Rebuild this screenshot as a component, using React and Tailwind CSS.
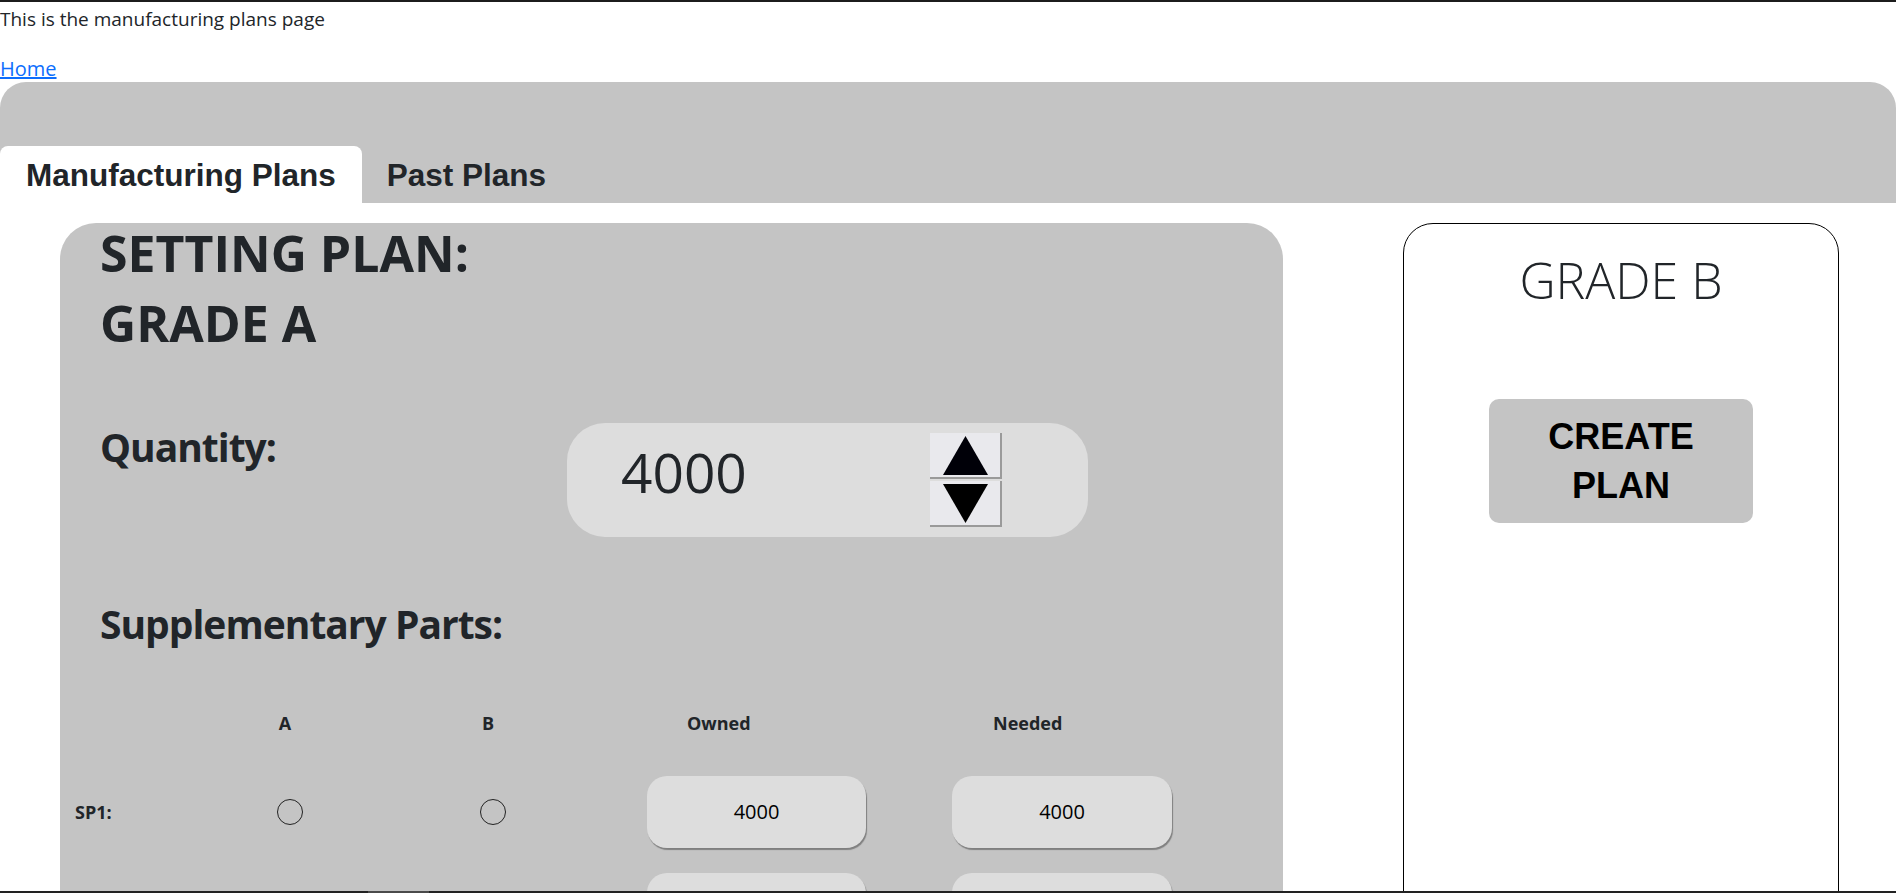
import React from 'react';

const segoe = { fontFamily: '"Open Sans", "Noto Sans", sans-serif' };
const arial = { fontFamily: '"Liberation Sans", Arial, sans-serif' };

const parts = ['SP1', 'SP2', 'SP3'];

// Spinner arrows drawn beside the quantity value
const Spinner = () => (
  <div className="flex flex-col w-[72px] h-[94px] gap-[2px]">
    <button className="flex-1 flex items-center justify-center bg-[#e9e9ed] border-r-2 border-b-2 border-[#9a9a9a]">
      <svg width="45" height="39" viewBox="0 0 45 39">
        <polygon points="22.5,0 45,39 0,39" fill="#000008" />
      </svg>
    </button>
    <button className="flex-1 flex items-center justify-center bg-[#e9e9ed] border-r-2 border-b-2 border-[#9a9a9a]">
      <svg width="45" height="39" viewBox="0 0 45 39">
        <polygon points="0,0 45,0 22.5,39" fill="#000" />
      </svg>
    </button>
  </div>
);

const PartRow = ({ name }) => (
  <div className="grid grid-cols-[115px_200px_206px_314px_320px] items-center h-[72px]">
    <span className="text-[18px] font-bold">{name}:</span>
    <div className="flex justify-center">
      <span className="w-[26px] h-[26px] rounded-full border border-[#222]" />
    </div>
    <div className="flex justify-center">
      <span className="w-[26px] h-[26px] rounded-full border border-[#222]" />
    </div>
    <div className="pl-[51px]">
      <div className="w-[219px] h-[72px] rounded-[20px] bg-[#dddddd] shadow-[1px_2px_1px_rgba(0,0,0,0.35)] flex items-center justify-center text-[20px] text-black">
        4000
      </div>
    </div>
    <div className="pl-[42px]">
      <div className="w-[220px] h-[72px] rounded-[20px] bg-[#dddddd] shadow-[1px_2px_1px_rgba(0,0,0,0.35)] flex items-center justify-center text-[20px] text-black">
        4000
      </div>
    </div>
  </div>
);

const App = () => {
  return (
    <div className="h-screen flex flex-col overflow-hidden bg-white text-[#212529]" style={segoe}>
      <div className="h-[2px] bg-[#1c1c1c]" />
      <div className="flex-1 overflow-hidden">
        <p className="pt-[2px] text-[19px] leading-[30px] mb-[20px]">This is the manufacturing plans page</p>
        <a href="#" className="block pt-[2px] text-[20px] leading-[26px] text-[#0d6efd] underline w-fit">Home</a>

        {/* tab bar */}
        <div className="h-[121px] bg-[#c4c4c4] rounded-t-[26px] flex items-end" style={arial}>
          <button className="h-[57px] px-[26px] bg-white rounded-t-[8px] text-[31.5px] leading-[36px] font-bold text-[#212529]">
            Manufacturing Plans
          </button>
          <button className="h-[57px] px-[25px] text-[31.5px] leading-[36px] font-bold text-[#212529]">
            Past Plans
          </button>
        </div>

        <div className="flex items-start pl-[60px] pt-[20px]">
          {/* setting plan card */}
          <div className="w-[1223px] h-[720px] bg-[#c4c4c4] rounded-[36px]">
            <div className="pl-[40px]">
              <h1 className="text-[50px] leading-[60px] font-bold mb-[10px]">SETTING PLAN:</h1>
              <h1 className="text-[50px] leading-[60px] font-bold">GRADE A</h1>

              <div className="flex items-start mt-[70px]">
                <h2 className="w-[467px] text-[39px] leading-[48px] font-bold tracking-[-1px]">Quantity:</h2>
                <div className="w-[521px] h-[114px] rounded-[38px] bg-[#dddddd] flex items-center pl-[54px] pr-[86px]">
                  <span className="flex-1 text-[55px] leading-[60px] mb-[16px]">4000</span>
                  <Spinner />
                </div>
              </div>

              <h2 className="mt-[63px] text-[39px] leading-[48px] font-bold tracking-[-1px]">Supplementary Parts:</h2>
            </div>

            <div className="pl-[15px] mt-[63px]">
              <div className="grid grid-cols-[115px_200px_206px_314px_320px] text-[18px] leading-[24px] font-bold mb-[41px]">
                <span />
                <span className="text-center pr-[10px]">A</span>
                <span className="text-center pr-[10px]">B</span>
                <span className="pl-[91px]">Owned</span>
                <span className="pl-[83px]">Needed</span>
              </div>
              <div className="flex flex-col gap-[25px]">
                {parts.map((p) => (
                  <PartRow key={p} name={p} />
                ))}
              </div>
            </div>
          </div>

          {/* grade b card */}
          <div className="ml-[120px] w-[436px] h-[720px] border border-black rounded-[30px] flex flex-col items-center pt-[26px]">
            <h1 className="text-[50px] leading-[60px] font-light">GRADE B</h1>
            <button
              className="mt-[89px] w-[264px] px-[20px] py-[13px] rounded-[10px] bg-[#c4c4c4] text-black text-[36px] leading-[49px] font-bold"
              style={arial}
            >
              CREATE PLAN
            </button>
          </div>
        </div>
      </div>
      <div className="h-[2px] bg-[#222] flex">
        <div className="ml-[368px] w-[61px] bg-[#4a4a4a]" />
      </div>
    </div>
  );
};

export default App;
